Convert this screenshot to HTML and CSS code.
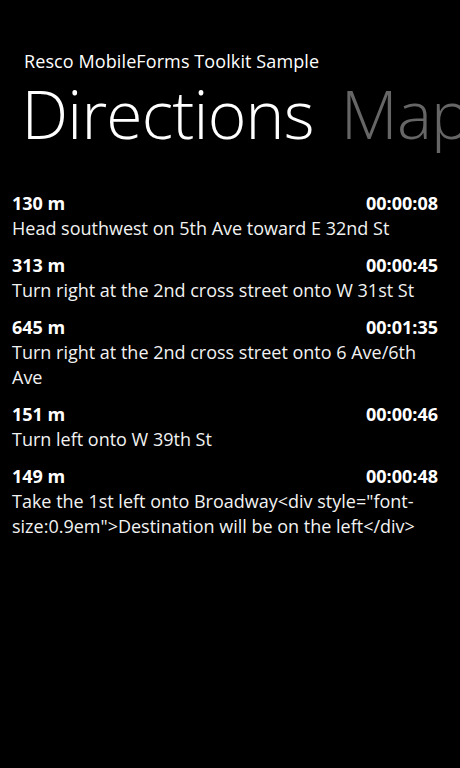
FILE: index.html
```html
<!DOCTYPE html>
<html>
<head>
<meta charset="utf-8">
<link rel="stylesheet" href="styles.css">
</head>
<body>
<div class="app">
  <div class="apptitle">Resco MobileForms Toolkit Sample</div>
  <div class="pivot">
    <span class="pv prev">p</span>
    <span class="pv active">Directions</span>
    <span class="pv">Map</span>
  </div>
  <ul class="steps">
    <li class="step">
      <div class="head"><span>130 m</span><span>00:00:08</span></div>
      <div class="desc">Head southwest on 5th Ave toward E 32nd St</div>
    </li>
    <li class="step">
      <div class="head"><span>313 m</span><span>00:00:45</span></div>
      <div class="desc">Turn right at the 2nd cross street onto W 31st St</div>
    </li>
    <li class="step">
      <div class="head"><span>645 m</span><span>00:01:35</span></div>
      <div class="desc">Turn right at the 2nd cross street onto 6 Ave/6th Ave</div>
    </li>
    <li class="step">
      <div class="head"><span>151 m</span><span>00:00:46</span></div>
      <div class="desc">Turn left onto W 39th St</div>
    </li>
    <li class="step">
      <div class="head"><span>149 m</span><span>00:00:48</span></div>
      <div class="desc">Take the 1st left onto Broadway&lt;div style="font-size:0.9em"&gt;Destination will be on the left&lt;/div&gt;</div>
    </li>
  </ul>
</div>
</body>
</html>
```
FILE: styles.css
```css
html, body {
  margin: 0;
  padding: 0;
  background: #000;
}
body {
  width: 460px;
  height: 768px;
  overflow: hidden;
  font-family: "Open Sans", "Noto Sans", sans-serif;
  color: #fff;
}
.app {
  display: flex;
  flex-direction: column;
}
.apptitle {
  font-size: 18px;
  line-height: 24px;
  padding: 49px 0 0 24px;
  letter-spacing: 0.1px;
}
.pivot {
  display: flex;
  align-items: baseline;
  white-space: nowrap;
  overflow: hidden;
  font-size: 66px;
  font-weight: 300;
  line-height: 80px;
  letter-spacing: -0.8px;
}
.pv {
  color: #666;
  margin-right: 27px;
}
.pv.prev {
  margin-left: -36px;
  margin-right: 19px;
}
.pv.active {
  color: #fff;
}
.steps {
  list-style: none;
  margin: 0;
  padding: 38px 22px 0 12px;
  display: flex;
  flex-direction: column;
  gap: 12px;
}
.step {
  display: flex;
  flex-direction: column;
}
.head {
  display: flex;
  justify-content: space-between;
  font-weight: 700;
  font-size: 18px;
  line-height: 25px;
}
.desc {
  font-size: 18px;
  line-height: 25px;
  color: #f2f2f2;
}
```
